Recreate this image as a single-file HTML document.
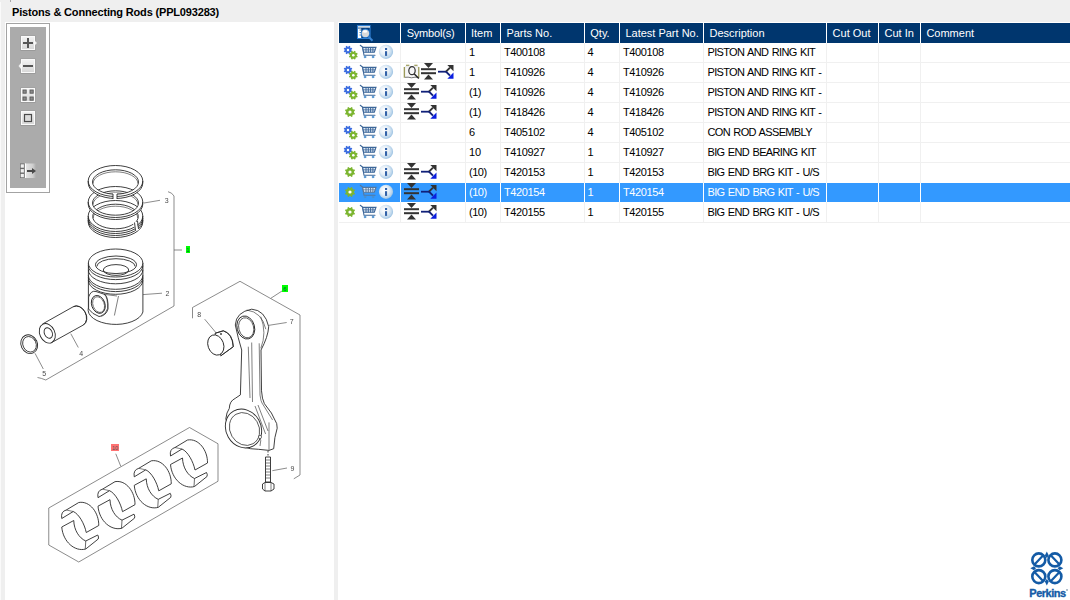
<!DOCTYPE html>
<html><head><meta charset="utf-8"><style>
*{margin:0;padding:0;box-sizing:border-box}
html,body{width:1070px;height:600px;overflow:hidden;background:#efefef;font-family:"Liberation Sans", sans-serif;position:relative}
.a{position:absolute}
.t{position:absolute;font-size:11px;line-height:13px;white-space:nowrap;color:#000}
.h{color:#fff}
</style></head><body>
<div class="a" style="left:0;top:2px;width:1px;height:598px;background:#fafafa"></div>
<div class="a" style="left:10px;top:0;width:1px;height:2px;background:#a8a8a8"></div>
<div class="t" style="left:12px;top:6px;font-weight:bold;font-size:11px;letter-spacing:-0.17px">Pistons &amp; Connecting Rods (PPL093283)</div>
<div class="a" style="left:5px;top:22px;width:329px;height:578px;background:#fff"></div>
<div class="a" style="left:338px;top:22px;width:732px;height:578px;background:#fff"></div>
<div class="a" style="left:339px;top:23px;width:731px;height:20px;background:#00366e"></div>
<div class="a" style="left:400px;top:23px;width:1px;height:20px;background:#fff"></div>
<div class="a" style="left:465px;top:23px;width:1px;height:20px;background:#fff"></div>
<div class="a" style="left:500px;top:23px;width:1px;height:20px;background:#fff"></div>
<div class="a" style="left:584px;top:23px;width:1px;height:20px;background:#fff"></div>
<div class="a" style="left:619px;top:23px;width:1px;height:20px;background:#fff"></div>
<div class="a" style="left:703px;top:23px;width:1px;height:20px;background:#fff"></div>
<div class="a" style="left:826px;top:23px;width:1px;height:20px;background:#fff"></div>
<div class="a" style="left:878px;top:23px;width:1px;height:20px;background:#fff"></div>
<div class="a" style="left:920px;top:23px;width:1px;height:20px;background:#fff"></div>
<div class="a" style="left:339px;top:183px;width:731px;height:19px;background:#3399ff"></div>
<div class="a" style="left:339px;top:62px;width:731px;height:1px;background:#f0f0f0"></div>
<div class="a" style="left:339px;top:82px;width:731px;height:1px;background:#f0f0f0"></div>
<div class="a" style="left:339px;top:102px;width:731px;height:1px;background:#f0f0f0"></div>
<div class="a" style="left:339px;top:122px;width:731px;height:1px;background:#f0f0f0"></div>
<div class="a" style="left:339px;top:142px;width:731px;height:1px;background:#f0f0f0"></div>
<div class="a" style="left:339px;top:162px;width:731px;height:1px;background:#f0f0f0"></div>
<div class="a" style="left:339px;top:222px;width:731px;height:1px;background:#f0f0f0"></div>
<div class="a" style="left:400px;top:43px;width:1px;height:179px;background:#f0f0f0"></div>
<div class="a" style="left:400px;top:183px;width:1px;height:19px;background:#fff"></div>
<div class="a" style="left:465px;top:43px;width:1px;height:179px;background:#f0f0f0"></div>
<div class="a" style="left:465px;top:183px;width:1px;height:19px;background:#fff"></div>
<div class="a" style="left:500px;top:43px;width:1px;height:179px;background:#f0f0f0"></div>
<div class="a" style="left:500px;top:183px;width:1px;height:19px;background:#fff"></div>
<div class="a" style="left:584px;top:43px;width:1px;height:179px;background:#f0f0f0"></div>
<div class="a" style="left:584px;top:183px;width:1px;height:19px;background:#fff"></div>
<div class="a" style="left:619px;top:43px;width:1px;height:179px;background:#f0f0f0"></div>
<div class="a" style="left:619px;top:183px;width:1px;height:19px;background:#fff"></div>
<div class="a" style="left:703px;top:43px;width:1px;height:179px;background:#f0f0f0"></div>
<div class="a" style="left:703px;top:183px;width:1px;height:19px;background:#fff"></div>
<div class="a" style="left:826px;top:43px;width:1px;height:179px;background:#f0f0f0"></div>
<div class="a" style="left:826px;top:183px;width:1px;height:19px;background:#fff"></div>
<div class="a" style="left:878px;top:43px;width:1px;height:179px;background:#f0f0f0"></div>
<div class="a" style="left:878px;top:183px;width:1px;height:19px;background:#fff"></div>
<div class="a" style="left:920px;top:43px;width:1px;height:179px;background:#f0f0f0"></div>
<div class="a" style="left:920px;top:183px;width:1px;height:19px;background:#fff"></div>
<div class="t h" style="left:406.7px;top:27px;letter-spacing:-0.2px">Symbol(s)</div>
<div class="t h" style="left:471.0px;top:27px;letter-spacing:0px">Item</div>
<div class="t h" style="left:506.4px;top:27px;letter-spacing:0px">Parts No.</div>
<div class="t h" style="left:590.3px;top:27px;letter-spacing:0px">Qty.</div>
<div class="t h" style="left:625.4px;top:27px;letter-spacing:0px">Latest Part No.</div>
<div class="t h" style="left:709.5px;top:27px;letter-spacing:0px">Description</div>
<div class="t h" style="left:832.6px;top:27px;letter-spacing:0px">Cut Out</div>
<div class="t h" style="left:884.5px;top:27px;letter-spacing:0px">Cut In</div>
<div class="t h" style="left:926.4px;top:27px;letter-spacing:0px">Comment</div>
<div class="t" style="left:469px;top:46px;color:#000;letter-spacing:0px;word-spacing:0px">1</div>
<div class="t" style="left:504px;top:46px;color:#000;letter-spacing:-0.38px;word-spacing:0px">T400108</div>
<div class="t" style="left:587.5px;top:46px;color:#000;letter-spacing:0px;word-spacing:0px">4</div>
<div class="t" style="left:623px;top:46px;color:#000;letter-spacing:-0.38px;word-spacing:0px">T400108</div>
<div class="t" style="left:707.5px;top:46px;color:#000;letter-spacing:-0.66px;word-spacing:1px">PISTON AND RING KIT</div>
<div class="t" style="left:469px;top:66px;color:#000;letter-spacing:0px;word-spacing:0px">1</div>
<div class="t" style="left:504px;top:66px;color:#000;letter-spacing:-0.38px;word-spacing:0px">T410926</div>
<div class="t" style="left:587.5px;top:66px;color:#000;letter-spacing:0px;word-spacing:0px">4</div>
<div class="t" style="left:623px;top:66px;color:#000;letter-spacing:-0.38px;word-spacing:0px">T410926</div>
<div class="t" style="left:707.5px;top:66px;color:#000;letter-spacing:-0.66px;word-spacing:1px">PISTON AND RING KIT -</div>
<div class="t" style="left:469px;top:86px;color:#000;letter-spacing:-0.5px;word-spacing:0px">(1)</div>
<div class="t" style="left:504px;top:86px;color:#000;letter-spacing:-0.38px;word-spacing:0px">T410926</div>
<div class="t" style="left:587.5px;top:86px;color:#000;letter-spacing:0px;word-spacing:0px">4</div>
<div class="t" style="left:623px;top:86px;color:#000;letter-spacing:-0.38px;word-spacing:0px">T410926</div>
<div class="t" style="left:707.5px;top:86px;color:#000;letter-spacing:-0.66px;word-spacing:1px">PISTON AND RING KIT -</div>
<div class="t" style="left:469px;top:106px;color:#000;letter-spacing:-0.5px;word-spacing:0px">(1)</div>
<div class="t" style="left:504px;top:106px;color:#000;letter-spacing:-0.38px;word-spacing:0px">T418426</div>
<div class="t" style="left:587.5px;top:106px;color:#000;letter-spacing:0px;word-spacing:0px">4</div>
<div class="t" style="left:623px;top:106px;color:#000;letter-spacing:-0.38px;word-spacing:0px">T418426</div>
<div class="t" style="left:707.5px;top:106px;color:#000;letter-spacing:-0.66px;word-spacing:1px">PISTON AND RING KIT -</div>
<div class="t" style="left:469px;top:126px;color:#000;letter-spacing:0px;word-spacing:0px">6</div>
<div class="t" style="left:504px;top:126px;color:#000;letter-spacing:-0.38px;word-spacing:0px">T405102</div>
<div class="t" style="left:587.5px;top:126px;color:#000;letter-spacing:0px;word-spacing:0px">4</div>
<div class="t" style="left:623px;top:126px;color:#000;letter-spacing:-0.38px;word-spacing:0px">T405102</div>
<div class="t" style="left:707.5px;top:126px;color:#000;letter-spacing:-0.66px;word-spacing:1px">CON ROD ASSEMBLY</div>
<div class="t" style="left:469px;top:146px;color:#000;letter-spacing:0px;word-spacing:0px">10</div>
<div class="t" style="left:504px;top:146px;color:#000;letter-spacing:-0.38px;word-spacing:0px">T410927</div>
<div class="t" style="left:587.5px;top:146px;color:#000;letter-spacing:0px;word-spacing:0px">1</div>
<div class="t" style="left:623px;top:146px;color:#000;letter-spacing:-0.38px;word-spacing:0px">T410927</div>
<div class="t" style="left:707.5px;top:146px;color:#000;letter-spacing:-0.66px;word-spacing:1px">BIG END BEARING KIT</div>
<div class="t" style="left:469px;top:166px;color:#000;letter-spacing:-0.5px;word-spacing:0px">(10)</div>
<div class="t" style="left:504px;top:166px;color:#000;letter-spacing:-0.38px;word-spacing:0px">T420153</div>
<div class="t" style="left:587.5px;top:166px;color:#000;letter-spacing:0px;word-spacing:0px">1</div>
<div class="t" style="left:623px;top:166px;color:#000;letter-spacing:-0.38px;word-spacing:0px">T420153</div>
<div class="t" style="left:707.5px;top:166px;color:#000;letter-spacing:-0.66px;word-spacing:1px">BIG END BRG KIT - U/S</div>
<div class="t" style="left:469px;top:186px;color:#fff;letter-spacing:-0.5px;word-spacing:0px">(10)</div>
<div class="t" style="left:504px;top:186px;color:#fff;letter-spacing:-0.38px;word-spacing:0px">T420154</div>
<div class="t" style="left:587.5px;top:186px;color:#fff;letter-spacing:0px;word-spacing:0px">1</div>
<div class="t" style="left:623px;top:186px;color:#fff;letter-spacing:-0.38px;word-spacing:0px">T420154</div>
<div class="t" style="left:707.5px;top:186px;color:#fff;letter-spacing:-0.66px;word-spacing:1px">BIG END BRG KIT - U/S</div>
<div class="t" style="left:469px;top:206px;color:#000;letter-spacing:-0.5px;word-spacing:0px">(10)</div>
<div class="t" style="left:504px;top:206px;color:#000;letter-spacing:-0.38px;word-spacing:0px">T420155</div>
<div class="t" style="left:587.5px;top:206px;color:#000;letter-spacing:0px;word-spacing:0px">1</div>
<div class="t" style="left:623px;top:206px;color:#000;letter-spacing:-0.38px;word-spacing:0px">T420155</div>
<div class="t" style="left:707.5px;top:206px;color:#000;letter-spacing:-0.66px;word-spacing:1px">BIG END BRG KIT - U/S</div>
<svg class="a" style="left:0;top:0" width="1070" height="600" viewBox="0 0 1070 600"><defs><radialGradient id="ig" cx="0.45" cy="0.45" r="0.55" fx="0.35" fy="0.35"><stop offset="0" stop-color="#ffffff"/><stop offset="0.55" stop-color="#e6eff7"/><stop offset="0.85" stop-color="#bcd6ec"/><stop offset="1" stop-color="#9cc2e2"/></radialGradient></defs><polygon points="351.36,50.51 352.29,50.99 351.73,52.33 350.73,52.02 350.02,52.73 350.33,53.73 348.99,54.29 348.51,53.36 347.49,53.36 347.01,54.29 345.67,53.73 345.98,52.73 345.27,52.02 344.27,52.33 343.71,50.99 344.64,50.51 344.64,49.49 343.71,49.01 344.27,47.67 345.27,47.98 345.98,47.27 345.67,46.27 347.01,45.71 347.49,46.64 348.51,46.64 348.99,45.71 350.33,46.27 350.02,47.27 350.73,47.98 351.73,47.67 352.29,49.01 351.36,49.49" fill="#3d6ee0"/><circle cx="348" cy="50" r="1.2" fill="#fff"/><polygon points="356.76,55.72 357.68,56.22 357.12,57.58 356.12,57.28 355.38,58.02 355.68,59.02 354.32,59.58 353.82,58.66 352.78,58.66 352.28,59.58 350.92,59.02 351.22,58.02 350.48,57.28 349.48,57.58 348.92,56.22 349.84,55.72 349.84,54.68 348.92,54.18 349.48,52.82 350.48,53.12 351.22,52.38 350.92,51.38 352.28,50.82 352.78,51.74 353.82,51.74 354.32,50.82 355.68,51.38 355.38,52.38 356.12,53.12 357.12,52.82 357.68,54.18 356.76,54.68" fill="#7cb530"/><circle cx="353.3" cy="55.2" r="1.3" fill="#fff"/><g transform="translate(360,45)" fill="none" stroke="#3d6799" stroke-width="1.1" stroke-linecap="round"><path d="M0.3,0.3 L2.5,2 L4,10.3 L15,10.3"/><path d="M2.6,2.2 L16,2.4 L14.3,7.3 L3.6,7.3 Z" fill="#dfe9f4"/><path d="M6,3 V7 M8.3,3 V7 M10.6,3 V7 M12.9,3 V7" stroke-width="1"/><path d="M3.5,4.8 H15" stroke-width="0.7"/><circle cx="5" cy="12" r="0.9" fill="#4a90d0" stroke="#4a90d0" stroke-width="0.6"/><circle cx="13" cy="12" r="0.9" fill="#4a90d0" stroke="#4a90d0" stroke-width="0.6"/></g><circle cx="386" cy="51.8" r="7.1" fill="url(#ig)"/><rect x="385" y="48" width="2.1" height="2" fill="#3262a8"/><rect x="385" y="51.2" width="2.1" height="4.7" fill="#3262a8"/><polygon points="351.36,70.51 352.29,70.99 351.73,72.33 350.73,72.02 350.02,72.73 350.33,73.73 348.99,74.29 348.51,73.36 347.49,73.36 347.01,74.29 345.67,73.73 345.98,72.73 345.27,72.02 344.27,72.33 343.71,70.99 344.64,70.51 344.64,69.49 343.71,69.01 344.27,67.67 345.27,67.98 345.98,67.27 345.67,66.27 347.01,65.71 347.49,66.64 348.51,66.64 348.99,65.71 350.33,66.27 350.02,67.27 350.73,67.98 351.73,67.67 352.29,69.01 351.36,69.49" fill="#3d6ee0"/><circle cx="348" cy="70" r="1.2" fill="#fff"/><polygon points="356.76,75.72 357.68,76.22 357.12,77.58 356.12,77.28 355.38,78.02 355.68,79.02 354.32,79.58 353.82,78.66 352.78,78.66 352.28,79.58 350.92,79.02 351.22,78.02 350.48,77.28 349.48,77.58 348.92,76.22 349.84,75.72 349.84,74.68 348.92,74.18 349.48,72.82 350.48,73.12 351.22,72.38 350.92,71.38 352.28,70.82 352.78,71.74 353.82,71.74 354.32,70.82 355.68,71.38 355.38,72.38 356.12,73.12 357.12,72.82 357.68,74.18 356.76,74.68" fill="#7cb530"/><circle cx="353.3" cy="75.2" r="1.3" fill="#fff"/><g transform="translate(360,65)" fill="none" stroke="#3d6799" stroke-width="1.1" stroke-linecap="round"><path d="M0.3,0.3 L2.5,2 L4,10.3 L15,10.3"/><path d="M2.6,2.2 L16,2.4 L14.3,7.3 L3.6,7.3 Z" fill="#dfe9f4"/><path d="M6,3 V7 M8.3,3 V7 M10.6,3 V7 M12.9,3 V7" stroke-width="1"/><path d="M3.5,4.8 H15" stroke-width="0.7"/><circle cx="5" cy="12" r="0.9" fill="#4a90d0" stroke="#4a90d0" stroke-width="0.6"/><circle cx="13" cy="12" r="0.9" fill="#4a90d0" stroke="#4a90d0" stroke-width="0.6"/></g><circle cx="386" cy="71.8" r="7.1" fill="url(#ig)"/><rect x="385" y="68" width="2.1" height="2" fill="#3262a8"/><rect x="385" y="71.2" width="2.1" height="4.7" fill="#3262a8"/><g transform="translate(401,63)"><path d="M3.5,4 L5,2.5 H8.5 L10.5,4 L12.5,2.5 H16.5 L18,4 V14.5 H3.5 Z" fill="#e9e9e9"/><path d="M4.5,4.5 H17 V14 H4.5 Z" fill="#f7f7f7"/><path d="M3.3,4 V14.8 M17.8,4 V14.8 M5,2.3 H8.3 M13.3,2.3 H16.5" stroke="#8c8a3c" stroke-width="1.1"/><path d="M4,14.3 Q7,13.8 10.5,14.8 Q14,13.8 17.5,14.3" fill="none" stroke="#555" stroke-width="0.8"/><ellipse cx="11" cy="7.7" rx="3.2" ry="4" fill="none" stroke="#333" stroke-width="1.2"/><path d="M13.3,11 L17.8,15.5" stroke="#222" stroke-width="1.4"/></g><g transform="translate(421,63)" fill="#333"><path d="M3,0 L12,0 L7.5,5 Z"/><rect x="0" y="5.2" width="15" height="2"/><rect x="0" y="9.2" width="15" height="2"/><path d="M3,16.5 L12,16.5 L7.5,11.5 Z"/></g><g transform="translate(438,65)"><path d="M0,6.7 H8.5" stroke="#10207a" stroke-width="1.8"/><path d="M8,6.7 L12,2.7" stroke="#333" stroke-width="1.9"/><path d="M9.3,0 H15.5 V6.2 Z" fill="#333"/><path d="M8,6.7 L12,10.7" stroke="#10207a" stroke-width="1.9"/><path d="M9.3,13.8 H15.5 V7.6 Z" fill="#0a1ee0"/></g><polygon points="351.36,90.51 352.29,90.99 351.73,92.33 350.73,92.02 350.02,92.73 350.33,93.73 348.99,94.29 348.51,93.36 347.49,93.36 347.01,94.29 345.67,93.73 345.98,92.73 345.27,92.02 344.27,92.33 343.71,90.99 344.64,90.51 344.64,89.49 343.71,89.01 344.27,87.67 345.27,87.98 345.98,87.27 345.67,86.27 347.01,85.71 347.49,86.64 348.51,86.64 348.99,85.71 350.33,86.27 350.02,87.27 350.73,87.98 351.73,87.67 352.29,89.01 351.36,89.49" fill="#3d6ee0"/><circle cx="348" cy="90" r="1.2" fill="#fff"/><polygon points="356.76,95.72 357.68,96.22 357.12,97.58 356.12,97.28 355.38,98.02 355.68,99.02 354.32,99.58 353.82,98.66 352.78,98.66 352.28,99.58 350.92,99.02 351.22,98.02 350.48,97.28 349.48,97.58 348.92,96.22 349.84,95.72 349.84,94.68 348.92,94.18 349.48,92.82 350.48,93.12 351.22,92.38 350.92,91.38 352.28,90.82 352.78,91.74 353.82,91.74 354.32,90.82 355.68,91.38 355.38,92.38 356.12,93.12 357.12,92.82 357.68,94.18 356.76,94.68" fill="#7cb530"/><circle cx="353.3" cy="95.2" r="1.3" fill="#fff"/><g transform="translate(360,85)" fill="none" stroke="#3d6799" stroke-width="1.1" stroke-linecap="round"><path d="M0.3,0.3 L2.5,2 L4,10.3 L15,10.3"/><path d="M2.6,2.2 L16,2.4 L14.3,7.3 L3.6,7.3 Z" fill="#dfe9f4"/><path d="M6,3 V7 M8.3,3 V7 M10.6,3 V7 M12.9,3 V7" stroke-width="1"/><path d="M3.5,4.8 H15" stroke-width="0.7"/><circle cx="5" cy="12" r="0.9" fill="#4a90d0" stroke="#4a90d0" stroke-width="0.6"/><circle cx="13" cy="12" r="0.9" fill="#4a90d0" stroke="#4a90d0" stroke-width="0.6"/></g><circle cx="386" cy="91.8" r="7.1" fill="url(#ig)"/><rect x="385" y="88" width="2.1" height="2" fill="#3262a8"/><rect x="385" y="91.2" width="2.1" height="4.7" fill="#3262a8"/><g transform="translate(404,83)" fill="#333"><path d="M3,0 L12,0 L7.5,5 Z"/><rect x="0" y="5.2" width="15" height="2"/><rect x="0" y="9.2" width="15" height="2"/><path d="M3,16.5 L12,16.5 L7.5,11.5 Z"/></g><g transform="translate(421,85)"><path d="M0,6.7 H8.5" stroke="#10207a" stroke-width="1.8"/><path d="M8,6.7 L12,2.7" stroke="#333" stroke-width="1.9"/><path d="M9.3,0 H15.5 V6.2 Z" fill="#333"/><path d="M8,6.7 L12,10.7" stroke="#10207a" stroke-width="1.9"/><path d="M9.3,13.8 H15.5 V7.6 Z" fill="#0a1ee0"/></g><polygon points="353.96,112.59 354.97,113.15 354.33,114.70 353.22,114.38 352.38,115.22 352.70,116.33 351.15,116.97 350.59,115.96 349.41,115.96 348.85,116.97 347.30,116.33 347.62,115.22 346.78,114.38 345.67,114.70 345.03,113.15 346.04,112.59 346.04,111.41 345.03,110.85 345.67,109.30 346.78,109.62 347.62,108.78 347.30,107.67 348.85,107.03 349.41,108.04 350.59,108.04 351.15,107.03 352.70,107.67 352.38,108.78 353.22,109.62 354.33,109.30 354.97,110.85 353.96,111.41" fill="#7cb530"/><circle cx="350" cy="112" r="1.6" fill="#fff"/><g transform="translate(360,105)" fill="none" stroke="#3d6799" stroke-width="1.1" stroke-linecap="round"><path d="M0.3,0.3 L2.5,2 L4,10.3 L15,10.3"/><path d="M2.6,2.2 L16,2.4 L14.3,7.3 L3.6,7.3 Z" fill="#dfe9f4"/><path d="M6,3 V7 M8.3,3 V7 M10.6,3 V7 M12.9,3 V7" stroke-width="1"/><path d="M3.5,4.8 H15" stroke-width="0.7"/><circle cx="5" cy="12" r="0.9" fill="#4a90d0" stroke="#4a90d0" stroke-width="0.6"/><circle cx="13" cy="12" r="0.9" fill="#4a90d0" stroke="#4a90d0" stroke-width="0.6"/></g><circle cx="386" cy="111.8" r="7.1" fill="url(#ig)"/><rect x="385" y="108" width="2.1" height="2" fill="#3262a8"/><rect x="385" y="111.2" width="2.1" height="4.7" fill="#3262a8"/><g transform="translate(404,103)" fill="#333"><path d="M3,0 L12,0 L7.5,5 Z"/><rect x="0" y="5.2" width="15" height="2"/><rect x="0" y="9.2" width="15" height="2"/><path d="M3,16.5 L12,16.5 L7.5,11.5 Z"/></g><g transform="translate(421,105)"><path d="M0,6.7 H8.5" stroke="#10207a" stroke-width="1.8"/><path d="M8,6.7 L12,2.7" stroke="#333" stroke-width="1.9"/><path d="M9.3,0 H15.5 V6.2 Z" fill="#333"/><path d="M8,6.7 L12,10.7" stroke="#10207a" stroke-width="1.9"/><path d="M9.3,13.8 H15.5 V7.6 Z" fill="#0a1ee0"/></g><polygon points="351.36,130.51 352.29,130.99 351.73,132.33 350.73,132.02 350.02,132.73 350.33,133.73 348.99,134.29 348.51,133.36 347.49,133.36 347.01,134.29 345.67,133.73 345.98,132.73 345.27,132.02 344.27,132.33 343.71,130.99 344.64,130.51 344.64,129.49 343.71,129.01 344.27,127.67 345.27,127.98 345.98,127.27 345.67,126.27 347.01,125.71 347.49,126.64 348.51,126.64 348.99,125.71 350.33,126.27 350.02,127.27 350.73,127.98 351.73,127.67 352.29,129.01 351.36,129.49" fill="#3d6ee0"/><circle cx="348" cy="130" r="1.2" fill="#fff"/><polygon points="356.76,135.72 357.68,136.22 357.12,137.58 356.12,137.28 355.38,138.02 355.68,139.02 354.32,139.58 353.82,138.66 352.78,138.66 352.28,139.58 350.92,139.02 351.22,138.02 350.48,137.28 349.48,137.58 348.92,136.22 349.84,135.72 349.84,134.68 348.92,134.18 349.48,132.82 350.48,133.12 351.22,132.38 350.92,131.38 352.28,130.82 352.78,131.74 353.82,131.74 354.32,130.82 355.68,131.38 355.38,132.38 356.12,133.12 357.12,132.82 357.68,134.18 356.76,134.68" fill="#7cb530"/><circle cx="353.3" cy="135.2" r="1.3" fill="#fff"/><g transform="translate(360,125)" fill="none" stroke="#3d6799" stroke-width="1.1" stroke-linecap="round"><path d="M0.3,0.3 L2.5,2 L4,10.3 L15,10.3"/><path d="M2.6,2.2 L16,2.4 L14.3,7.3 L3.6,7.3 Z" fill="#dfe9f4"/><path d="M6,3 V7 M8.3,3 V7 M10.6,3 V7 M12.9,3 V7" stroke-width="1"/><path d="M3.5,4.8 H15" stroke-width="0.7"/><circle cx="5" cy="12" r="0.9" fill="#4a90d0" stroke="#4a90d0" stroke-width="0.6"/><circle cx="13" cy="12" r="0.9" fill="#4a90d0" stroke="#4a90d0" stroke-width="0.6"/></g><circle cx="386" cy="131.8" r="7.1" fill="url(#ig)"/><rect x="385" y="128" width="2.1" height="2" fill="#3262a8"/><rect x="385" y="131.2" width="2.1" height="4.7" fill="#3262a8"/><polygon points="351.36,150.51 352.29,150.99 351.73,152.33 350.73,152.02 350.02,152.73 350.33,153.73 348.99,154.29 348.51,153.36 347.49,153.36 347.01,154.29 345.67,153.73 345.98,152.73 345.27,152.02 344.27,152.33 343.71,150.99 344.64,150.51 344.64,149.49 343.71,149.01 344.27,147.67 345.27,147.98 345.98,147.27 345.67,146.27 347.01,145.71 347.49,146.64 348.51,146.64 348.99,145.71 350.33,146.27 350.02,147.27 350.73,147.98 351.73,147.67 352.29,149.01 351.36,149.49" fill="#3d6ee0"/><circle cx="348" cy="150" r="1.2" fill="#fff"/><polygon points="356.76,155.72 357.68,156.22 357.12,157.58 356.12,157.28 355.38,158.02 355.68,159.02 354.32,159.58 353.82,158.66 352.78,158.66 352.28,159.58 350.92,159.02 351.22,158.02 350.48,157.28 349.48,157.58 348.92,156.22 349.84,155.72 349.84,154.68 348.92,154.18 349.48,152.82 350.48,153.12 351.22,152.38 350.92,151.38 352.28,150.82 352.78,151.74 353.82,151.74 354.32,150.82 355.68,151.38 355.38,152.38 356.12,153.12 357.12,152.82 357.68,154.18 356.76,154.68" fill="#7cb530"/><circle cx="353.3" cy="155.2" r="1.3" fill="#fff"/><g transform="translate(360,145)" fill="none" stroke="#3d6799" stroke-width="1.1" stroke-linecap="round"><path d="M0.3,0.3 L2.5,2 L4,10.3 L15,10.3"/><path d="M2.6,2.2 L16,2.4 L14.3,7.3 L3.6,7.3 Z" fill="#dfe9f4"/><path d="M6,3 V7 M8.3,3 V7 M10.6,3 V7 M12.9,3 V7" stroke-width="1"/><path d="M3.5,4.8 H15" stroke-width="0.7"/><circle cx="5" cy="12" r="0.9" fill="#4a90d0" stroke="#4a90d0" stroke-width="0.6"/><circle cx="13" cy="12" r="0.9" fill="#4a90d0" stroke="#4a90d0" stroke-width="0.6"/></g><circle cx="386" cy="151.8" r="7.1" fill="url(#ig)"/><rect x="385" y="148" width="2.1" height="2" fill="#3262a8"/><rect x="385" y="151.2" width="2.1" height="4.7" fill="#3262a8"/><polygon points="353.96,172.59 354.97,173.15 354.33,174.70 353.22,174.38 352.38,175.22 352.70,176.33 351.15,176.97 350.59,175.96 349.41,175.96 348.85,176.97 347.30,176.33 347.62,175.22 346.78,174.38 345.67,174.70 345.03,173.15 346.04,172.59 346.04,171.41 345.03,170.85 345.67,169.30 346.78,169.62 347.62,168.78 347.30,167.67 348.85,167.03 349.41,168.04 350.59,168.04 351.15,167.03 352.70,167.67 352.38,168.78 353.22,169.62 354.33,169.30 354.97,170.85 353.96,171.41" fill="#7cb530"/><circle cx="350" cy="172" r="1.6" fill="#fff"/><g transform="translate(360,165)" fill="none" stroke="#3d6799" stroke-width="1.1" stroke-linecap="round"><path d="M0.3,0.3 L2.5,2 L4,10.3 L15,10.3"/><path d="M2.6,2.2 L16,2.4 L14.3,7.3 L3.6,7.3 Z" fill="#dfe9f4"/><path d="M6,3 V7 M8.3,3 V7 M10.6,3 V7 M12.9,3 V7" stroke-width="1"/><path d="M3.5,4.8 H15" stroke-width="0.7"/><circle cx="5" cy="12" r="0.9" fill="#4a90d0" stroke="#4a90d0" stroke-width="0.6"/><circle cx="13" cy="12" r="0.9" fill="#4a90d0" stroke="#4a90d0" stroke-width="0.6"/></g><circle cx="386" cy="171.8" r="7.1" fill="url(#ig)"/><rect x="385" y="168" width="2.1" height="2" fill="#3262a8"/><rect x="385" y="171.2" width="2.1" height="4.7" fill="#3262a8"/><g transform="translate(404,163)" fill="#333"><path d="M3,0 L12,0 L7.5,5 Z"/><rect x="0" y="5.2" width="15" height="2"/><rect x="0" y="9.2" width="15" height="2"/><path d="M3,16.5 L12,16.5 L7.5,11.5 Z"/></g><g transform="translate(421,165)"><path d="M0,6.7 H8.5" stroke="#10207a" stroke-width="1.8"/><path d="M8,6.7 L12,2.7" stroke="#333" stroke-width="1.9"/><path d="M9.3,0 H15.5 V6.2 Z" fill="#333"/><path d="M8,6.7 L12,10.7" stroke="#10207a" stroke-width="1.9"/><path d="M9.3,13.8 H15.5 V7.6 Z" fill="#0a1ee0"/></g><polygon points="353.96,192.59 354.97,193.15 354.33,194.70 353.22,194.38 352.38,195.22 352.70,196.33 351.15,196.97 350.59,195.96 349.41,195.96 348.85,196.97 347.30,196.33 347.62,195.22 346.78,194.38 345.67,194.70 345.03,193.15 346.04,192.59 346.04,191.41 345.03,190.85 345.67,189.30 346.78,189.62 347.62,188.78 347.30,187.67 348.85,187.03 349.41,188.04 350.59,188.04 351.15,187.03 352.70,187.67 352.38,188.78 353.22,189.62 354.33,189.30 354.97,190.85 353.96,191.41" fill="#7cb530"/><circle cx="350" cy="192" r="1.6" fill="#fff"/><g transform="translate(360,185)" fill="none" stroke="#56789e" stroke-width="1.1" stroke-linecap="round"><path d="M0.3,0.3 L2.5,2 L4,10.3 L15,10.3"/><path d="M2.6,2.2 L16,2.4 L14.3,7.3 L3.6,7.3 Z" fill="#dfe9f4"/><path d="M6,3 V7 M8.3,3 V7 M10.6,3 V7 M12.9,3 V7" stroke-width="1"/><path d="M3.5,4.8 H15" stroke-width="0.7"/><circle cx="5" cy="12" r="0.9" fill="#4a90d0" stroke="#4a90d0" stroke-width="0.6"/><circle cx="13" cy="12" r="0.9" fill="#4a90d0" stroke="#4a90d0" stroke-width="0.6"/></g><circle cx="386" cy="191.8" r="7.1" fill="url(#ig)"/><rect x="385" y="188" width="2.1" height="2" fill="#3262a8"/><rect x="385" y="191.2" width="2.1" height="4.7" fill="#3262a8"/><g transform="translate(404,183)" fill="#333"><path d="M3,0 L12,0 L7.5,5 Z"/><rect x="0" y="5.2" width="15" height="2"/><rect x="0" y="9.2" width="15" height="2"/><path d="M3,16.5 L12,16.5 L7.5,11.5 Z"/></g><g transform="translate(421,185)"><path d="M0,6.7 H8.5" stroke="#10207a" stroke-width="1.8"/><path d="M8,6.7 L12,2.7" stroke="#333" stroke-width="1.9"/><path d="M9.3,0 H15.5 V6.2 Z" fill="#333"/><path d="M8,6.7 L12,10.7" stroke="#10207a" stroke-width="1.9"/><path d="M9.3,13.8 H15.5 V7.6 Z" fill="#0a1ee0"/></g><polygon points="353.96,212.59 354.97,213.15 354.33,214.70 353.22,214.38 352.38,215.22 352.70,216.33 351.15,216.97 350.59,215.96 349.41,215.96 348.85,216.97 347.30,216.33 347.62,215.22 346.78,214.38 345.67,214.70 345.03,213.15 346.04,212.59 346.04,211.41 345.03,210.85 345.67,209.30 346.78,209.62 347.62,208.78 347.30,207.67 348.85,207.03 349.41,208.04 350.59,208.04 351.15,207.03 352.70,207.67 352.38,208.78 353.22,209.62 354.33,209.30 354.97,210.85 353.96,211.41" fill="#7cb530"/><circle cx="350" cy="212" r="1.6" fill="#fff"/><g transform="translate(360,205)" fill="none" stroke="#3d6799" stroke-width="1.1" stroke-linecap="round"><path d="M0.3,0.3 L2.5,2 L4,10.3 L15,10.3"/><path d="M2.6,2.2 L16,2.4 L14.3,7.3 L3.6,7.3 Z" fill="#dfe9f4"/><path d="M6,3 V7 M8.3,3 V7 M10.6,3 V7 M12.9,3 V7" stroke-width="1"/><path d="M3.5,4.8 H15" stroke-width="0.7"/><circle cx="5" cy="12" r="0.9" fill="#4a90d0" stroke="#4a90d0" stroke-width="0.6"/><circle cx="13" cy="12" r="0.9" fill="#4a90d0" stroke="#4a90d0" stroke-width="0.6"/></g><circle cx="386" cy="211.8" r="7.1" fill="url(#ig)"/><rect x="385" y="208" width="2.1" height="2" fill="#3262a8"/><rect x="385" y="211.2" width="2.1" height="4.7" fill="#3262a8"/><g transform="translate(404,203)" fill="#333"><path d="M3,0 L12,0 L7.5,5 Z"/><rect x="0" y="5.2" width="15" height="2"/><rect x="0" y="9.2" width="15" height="2"/><path d="M3,16.5 L12,16.5 L7.5,11.5 Z"/></g><g transform="translate(421,205)"><path d="M0,6.7 H8.5" stroke="#10207a" stroke-width="1.8"/><path d="M8,6.7 L12,2.7" stroke="#333" stroke-width="1.9"/><path d="M9.3,0 H15.5 V6.2 Z" fill="#333"/><path d="M8,6.7 L12,10.7" stroke="#10207a" stroke-width="1.9"/><path d="M9.3,13.8 H15.5 V7.6 Z" fill="#0a1ee0"/></g><g><rect x="357.5" y="25.5" width="12.6" height="13" fill="#0a3f7a" stroke="#2f7fd2" stroke-width="1"/><rect x="358" y="26.2" width="12" height="1.4" fill="#fff"/><rect x="358" y="28.5" width="3.2" height="9.5" fill="#fff"/><path d="M359.5,30 H361 M359.5,32.5 H361 M359.5,35 H361" stroke="#2f6fb2" stroke-width="0.9"/><circle cx="365.4" cy="33.4" r="4.6" fill="#2f7fd2"/><circle cx="365.4" cy="33.4" r="3.7" fill="#d9d9d9"/><ellipse cx="365" cy="31.5" rx="2.2" ry="1.2" fill="#fff"/><path d="M368.6,36.8 L372.5,40.8" stroke="#3a86d6" stroke-width="2"/></g></svg>
<svg class="a" style="left:0;top:0" width="1070" height="600" viewBox="0 0 1070 600"><g fill="none" stroke="#5a5a5a" stroke-width="0.7"><path d="M168,191.7 Q172,192.5 174,196 V306 L45.8,380 Q41,378 37.5,377.5 M174,250 H182"/><path d="M144,203 L160,200.3 M143,294.6 L162,293.2 M70.8,333.7 L78.3,347.5 M35,353.3 L43.3,369"/><path d="M192.5,318.3 V307.5 L240,281.3 L300,315 V475 L293.8,478.8 M270.8,298.3 L282,291"/><path d="M204.7,319.2 L215.8,332.5 M269,325.3 L286.7,322.5 M272.3,470.7 L287,468"/><path d="M48.75,508 L189.5,427.5 L218,443.75 V481.25 L78.75,562 L48.75,545 Z M115.75,453.75 L120.75,466.25"/></g><g fill="none" stroke="#2a2a2a" stroke-width="0.9" stroke-linejoin="round"><path d="M88.2,216 A27.3,15.5 0 0 1 142.8,216 L142.8,222 A27.3,15.5 0 0 1 88.2,222 Z M92.7,216.5 A22.8,12.3 0 0 0 138.3,216.5 A22.8,12.3 0 0 0 92.7,216.5 Z" fill="#fff" fill-rule="evenodd" stroke="none"/><ellipse cx="115.5" cy="216" rx="27.3" ry="15.5" /><path d="M88.2,218.0 A27.3,15.5 0 0 0 142.8,218.0" /><path d="M88.2,220.0 A27.3,15.5 0 0 0 142.8,220.0" /><path d="M88.2,222.0 A27.3,15.5 0 0 0 142.8,222.0" /><path d="M88.2,216 V222 M142.8,216 V222"/><ellipse cx="115.5" cy="216.5" rx="22.8" ry="12.3" /><path d="M93.3,217.9 A22.2,11.700000000000001 0 0 1 137.7,217.9" stroke-width="0.6"/><path d="M88.2,202 A27.3,15.5 0 0 1 142.8,202 L142.8,204 A27.3,15.5 0 0 1 88.2,204 Z M92.5,203 A23,12.2 0 0 0 138.5,203 A23,12.2 0 0 0 92.5,203 Z" fill="#fff" fill-rule="evenodd" stroke="none"/><ellipse cx="115.5" cy="202" rx="27.3" ry="15.5" /><path d="M88.2,204.0 A27.3,15.5 0 0 0 142.8,204.0" /><path d="M88.2,202 V204 M142.8,202 V204"/><ellipse cx="115.5" cy="203" rx="23" ry="12.2" /><path d="M93.1,204.4 A22.4,11.6 0 0 1 137.9,204.4" stroke-width="0.6"/><path d="M88.2,181 A27.3,15.5 0 0 1 142.8,181 L142.8,183 A27.3,15.5 0 0 1 88.2,183 Z M92.5,182 A23,12.2 0 0 0 138.5,182 A23,12.2 0 0 0 92.5,182 Z" fill="#fff" fill-rule="evenodd" stroke="none"/><ellipse cx="115.5" cy="181" rx="27.3" ry="15.5" /><path d="M88.2,183.0 A27.3,15.5 0 0 0 142.8,183.0" /><path d="M88.2,181 V183 M142.8,181 V183"/><ellipse cx="115.5" cy="182" rx="23" ry="12.2" /><path d="M93.1,183.4 A22.4,11.6 0 0 1 137.9,183.4" stroke-width="0.6"/><rect x="113" y="193" width="4" height="7" fill="#fff" stroke="none"/><path d="M113,194 V199 M117,194 V199"/><rect x="134" y="222" width="3.5" height="9" fill="#fff" stroke="none" transform="rotate(-20 135 226)"/><path d="M134.5,222.5 L135.5,230.5 M137.5,221 L138.5,229"/><path d="M88.4,263 V307.5 A27.25,14.5 0 0 0 142.9,312 V263 Z" fill="#fff"/><ellipse cx="115.6" cy="263" rx="27.25" ry="14" fill="#fff"/><ellipse cx="116" cy="264.8" rx="20.5" ry="8.8" /><path d="M96.8,266.5 A19.2,7.8 0 0 1 135.2,266.5" /><ellipse cx="116" cy="270" rx="12.7" ry="5.4" /><path d="M88.35,265.6 A27.25,14 0 0 0 142.85,265.6" /><path d="M88.35,269.8 A27.25,14 0 0 0 142.85,269.8" /><path d="M88.35,275.3 A27.25,14 0 0 0 142.85,275.3" /><path d="M88.35,277.6 A27.25,14 0 0 0 142.85,277.6" /><path d="M88.35,280.3 A27.25,14 0 0 0 142.85,280.3" /><path d="M88.6,297 Q91,290 96,291.5 L105,294.5 Q108.5,298 108,309 Q106,316 99,316.5 Q92,314 88.6,309 Z" fill="#fff"/><ellipse cx="98.3" cy="304.4" rx="6.65" ry="9.2" transform="rotate(-20 98.3 304.4)"/><ellipse cx="98.6" cy="304.6" rx="5.6" ry="8.1" transform="rotate(-20 98.6 304.6)" stroke-width="0.6"/><path d="M104.5,294.5 Q108,298 107.5,308.5 Q106,314 101,316 M118.5,296 L114.4,315.5 M104,294.3 L117,296" stroke-width="0.6"/><path d="M42.5,324 L73.3,306.7 A7.5,10 -30 0 1 83.3,325 L50.8,343 Z" fill="#fff"/><ellipse cx="47.3" cy="333.3" rx="7.5" ry="10.2" transform="rotate(-25 47.3 333.3)" fill="#fff"/><ellipse cx="48.3" cy="333" rx="3.9" ry="5.5" transform="rotate(-25 48.3 333)"/><path d="M73.3,306.7 A7.5,10.2 -25 0 1 83.3,325"/><ellipse cx="29.2" cy="344.2" rx="8.2" ry="9.6" transform="rotate(-25 29.2 344.2)" stroke-width="0.9"/><ellipse cx="29.5" cy="344.3" rx="6.6" ry="8" transform="rotate(-25 29.5 344.3)" stroke-width="0.8"/><path d="M33,337 L35.5,338.5 M34,339.5 L36,341" stroke-width="0.6"/><path d="M235.3,325 Q236,312 251.7,309.2 Q265,310 268.7,326.7 Q268,337 261,350 L261.5,390.8 Q262,399 264.4,403.7 L271.4,413 L276.7,423.6 L277.2,428.2 L274.9,437.6 L273.7,448.7 L269,450.4 L258.6,449.3 L250.4,448.7 Q244,447.5 239.9,444.6 L231.7,435.2 L227,422.4 L225.8,418.9 L227,413 L229.3,408.4 Q229.5,401 235.2,398.4 L240.4,394.9 L241.7,350 Q238,338 235.3,325 Z" fill="#fff"/><ellipse cx="245.8" cy="327.5" rx="8.75" ry="11.7" transform="rotate(-15 245.8 327.5)" fill="#fff"/><ellipse cx="246.2" cy="327.8" rx="7.4" ry="10.2" transform="rotate(-15 246.2 327.8)" stroke-width="0.7"/><path d="M248.3,346.7 L250,398 M251.7,342.5 L252.5,402 M259.2,343.3 L260,395 Q261,402 262,403 L272.6,420 M260.8,316.7 Q267,333 260.8,348.3 M246.7,310 Q262,312 265.8,329.2" stroke-width="0.6"/><ellipse cx="243.5" cy="428.5" rx="20" ry="17.5" transform="rotate(60 243.5 428.5)" fill="#fff"/><ellipse cx="244.5" cy="429" rx="17" ry="14.5" transform="rotate(60 244.5 429)" stroke-width="0.7"/><path d="M255,406 L265.6,434 M258,405 L268,431 M269,422.4 V449.8 M259,436 Q262,440 260,446" stroke-width="0.6"/><circle cx="260" cy="437" r="1.6" fill="#fff" stroke-width="0.6"/><path d="M268,451 V456" stroke-dasharray="1.5 1.5"/><rect x="265.5" y="457" width="5" height="25" fill="#fff"/><path d="M266,460 H270 M266,463 H270 M266,466 H270 M266,469 H270 M266,472 H270 M266,475 H270 M266,478 H270" stroke-width="0.6"/><path d="M262.5,484 L265,482.5 H271 L274,484 V489 L271,491 H265 L262.5,489 Z" fill="#fff"/><path d="M265,482.5 V491 M271,482.5 V491" stroke-width="0.6"/><path d="M215,333.3 L223.3,330.8 Q232,333 233.3,346.7 L220.8,355.8 Z" fill="#fff"/><ellipse cx="215.8" cy="345" rx="7.8" ry="10.4" transform="rotate(-20 215.8 345)" fill="#fff"/><path d="M223.3,330.8 Q233,334 233.3,346.7 L220.8,355.8 M215,333.3 L223.3,330.8"/><circle cx="221" cy="334" r="1" fill="#444" stroke="none"/><g transform="translate(0.0,-0.0)"><path d="M61.75,518.5 Q60.5,511.5 66.25,510 L78.75,502.5 C90,500.5 99,513 98.75,525.5 L86.25,532.5 C84.5,524 79,514 73.25,511.5 Z" fill="#fff"/><path d="M66.25,510 L73.25,511.5" stroke-width="0.6"/><path d="M61.75,527 L73.75,520.5 C74,530 79,538 85.75,541 L97.75,535 Q99,537 98.25,539 L85.75,549 C75,552 63,542 61.75,527 Z" fill="#fff"/><path d="M85.75,541 L85.25,549" stroke-width="0.7"/></g><g transform="translate(36.25,-20.83)"><path d="M61.75,518.5 Q60.5,511.5 66.25,510 L78.75,502.5 C90,500.5 99,513 98.75,525.5 L86.25,532.5 C84.5,524 79,514 73.25,511.5 Z" fill="#fff"/><path d="M66.25,510 L73.25,511.5" stroke-width="0.6"/><path d="M61.75,527 L73.75,520.5 C74,530 79,538 85.75,541 L97.75,535 Q99,537 98.25,539 L85.75,549 C75,552 63,542 61.75,527 Z" fill="#fff"/><path d="M85.75,541 L85.25,549" stroke-width="0.7"/></g><g transform="translate(72.5,-41.66)"><path d="M61.75,518.5 Q60.5,511.5 66.25,510 L78.75,502.5 C90,500.5 99,513 98.75,525.5 L86.25,532.5 C84.5,524 79,514 73.25,511.5 Z" fill="#fff"/><path d="M66.25,510 L73.25,511.5" stroke-width="0.6"/><path d="M61.75,527 L73.75,520.5 C74,530 79,538 85.75,541 L97.75,535 Q99,537 98.25,539 L85.75,549 C75,552 63,542 61.75,527 Z" fill="#fff"/><path d="M85.75,541 L85.25,549" stroke-width="0.7"/></g><g transform="translate(108.75,-62.489999999999995)"><path d="M61.75,518.5 Q60.5,511.5 66.25,510 L78.75,502.5 C90,500.5 99,513 98.75,525.5 L86.25,532.5 C84.5,524 79,514 73.25,511.5 Z" fill="#fff"/><path d="M66.25,510 L73.25,511.5" stroke-width="0.6"/><path d="M61.75,527 L73.75,520.5 C74,530 79,538 85.75,541 L97.75,535 Q99,537 98.25,539 L85.75,549 C75,552 63,542 61.75,527 Z" fill="#fff"/><path d="M85.75,541 L85.25,549" stroke-width="0.7"/></g></g></svg><svg class="a" style="left:0;top:0;filter:grayscale(1)" width="1070" height="600" viewBox="0 0 1070 600"><text x="166.7" y="203" font-size="7" fill="#4a4a4a" font-family="Liberation Sans, sans-serif" text-anchor="middle">3</text><text x="167.5" y="296" font-size="7" fill="#4a4a4a" font-family="Liberation Sans, sans-serif" text-anchor="middle">2</text><text x="81.3" y="356" font-size="7" fill="#4a4a4a" font-family="Liberation Sans, sans-serif" text-anchor="middle">4</text><text x="44.2" y="375.5" font-size="7" fill="#4a4a4a" font-family="Liberation Sans, sans-serif" text-anchor="middle">5</text><text x="199.2" y="316.5" font-size="7" fill="#4a4a4a" font-family="Liberation Sans, sans-serif" text-anchor="middle">8</text><text x="291.7" y="323.5" font-size="7" fill="#4a4a4a" font-family="Liberation Sans, sans-serif" text-anchor="middle">7</text><text x="292.5" y="470.5" font-size="7" fill="#4a4a4a" font-family="Liberation Sans, sans-serif" text-anchor="middle">9</text></svg><svg class="a" style="left:0;top:0" width="1070" height="600" viewBox="0 0 1070 600"><rect x="186" y="246" width="4" height="7" fill="#00ff00"/><text x="188" y="252" font-size="6" fill="#063" text-anchor="middle" font-family="Liberation Sans, sans-serif">1</text><rect x="282" y="285" width="6" height="7" fill="#00ff00"/><text x="285" y="291" font-size="6" fill="#063" text-anchor="middle" font-family="Liberation Sans, sans-serif">6</text><rect x="111" y="444" width="8" height="7" fill="#ff7272"/><text x="115" y="450" font-size="5.5" fill="#555" text-anchor="middle" font-family="Liberation Sans, sans-serif">10</text></svg>
<div class="a" style="left:6px;top:23px;width:44px;height:170px;border:1px solid #a3a3a3;background:#fff"></div><div class="a" style="left:10px;top:27px;width:36px;height:161px;background:#ababab"></div><svg class="a" style="left:0;top:0" width="1070" height="600" viewBox="0 0 1070 600"><defs><linearGradient id="bg" x1="0" y1="0" x2="0" y2="1"><stop offset="0" stop-color="#f4f4f4"/><stop offset="1" stop-color="#d6d6d6"/></linearGradient><linearGradient id="fg" x1="0" y1="0" x2="1" y2="0"><stop offset="0" stop-color="#e8e8e8"/><stop offset="0.7" stop-color="#cfcfcf"/><stop offset="1" stop-color="#ababab"/></linearGradient></defs><rect x="20.5" y="35.5" width="15" height="15.5" fill="#8f8f8f" opacity="0.6"/><rect x="21" y="36" width="14" height="14" fill="url(#bg)"/><rect x="21.5" y="36.5" width="13" height="13" fill="none" stroke="#fafafa" stroke-width="1"/><path d="M35,41 L37,43 L35,45 Z" fill="#f0f0f0"/><rect x="23" y="42" width="10" height="2" fill="#565656"/><rect x="27" y="38" width="2" height="10" fill="#565656"/><rect x="20.5" y="58.5" width="15" height="15.5" fill="#8f8f8f" opacity="0.6"/><rect x="21" y="59" width="14" height="14" fill="url(#bg)"/><rect x="21.5" y="59.5" width="13" height="13" fill="none" stroke="#fafafa" stroke-width="1"/><path d="M21,63 L18.5,66 L21,69 Z" fill="#f0f0f0"/><rect x="23" y="65" width="10" height="2" fill="#565656"/><rect x="20.5" y="87.5" width="15" height="15.5" fill="#8f8f8f" opacity="0.6"/><rect x="21" y="88" width="14" height="14" fill="url(#bg)"/><rect x="21.5" y="88.5" width="13" height="13" fill="none" stroke="#fafafa" stroke-width="1"/><rect x="23.0" y="90.0" width="3.2" height="3.2" fill="#8a8a8a" stroke="#5a5a5a" stroke-width="0.9"/><rect x="30.0" y="90.0" width="3.2" height="3.2" fill="#8a8a8a" stroke="#5a5a5a" stroke-width="0.9"/><rect x="23.0" y="97.0" width="3.2" height="3.2" fill="#8a8a8a" stroke="#5a5a5a" stroke-width="0.9"/><rect x="30.0" y="97.0" width="3.2" height="3.2" fill="#8a8a8a" stroke="#5a5a5a" stroke-width="0.9"/><rect x="20.5" y="110.5" width="15" height="15.5" fill="#8f8f8f" opacity="0.6"/><rect x="21" y="111" width="14" height="14" fill="url(#bg)"/><rect x="21.5" y="111.5" width="13" height="13" fill="none" stroke="#fafafa" stroke-width="1"/><rect x="24.5" y="114.5" width="7" height="7" fill="#dcdcdc" stroke="#4a4a4a" stroke-width="1.2"/><rect x="20" y="163.5" width="4.5" height="14.5" fill="#6a6a6a"/><rect x="20.7" y="164.3" width="3.2" height="3.4" fill="#efefef"/><rect x="20.7" y="169.1" width="3.2" height="3.4" fill="#efefef"/><rect x="20.7" y="173.9" width="3.2" height="3.4" fill="#efefef"/><rect x="25" y="163.5" width="11" height="14.5" fill="url(#fg)"/><path d="M25.5,163.5 V178" stroke="#fff" stroke-width="1"/><path d="M27,171 H32.5" stroke="#484848" stroke-width="2"/><path d="M32,168 L36,171 L32,174 Z" fill="#484848"/><g fill="none" stroke="#145ba6" stroke-width="2.6"><circle cx="1038.8" cy="559.9" r="6.5"/><circle cx="1054.9" cy="559.9" r="6.5"/><circle cx="1038.8" cy="576.6" r="6.5"/><circle cx="1054.9" cy="576.6" r="6.5"/><path d="M1034.5,564.5 L1043.5,555 M1050.5,555 L1059.5,564.5 M1034.5,572 L1043.5,581.5 M1050.5,581.5 L1059.5,572" stroke-width="2.2"/></g><g fill="#145ba6"><path d="M1046.8,551.5 L1048.8,555.5 L1046.8,558 L1044.8,555.5 Z"/><path d="M1046.8,585.5 L1048.8,581.5 L1046.8,579 L1044.8,581.5 Z"/><path d="M1030.3,568.3 L1034,566.3 L1036,568.3 L1034,570.3 Z"/><path d="M1063.3,568.3 L1059.6,566.3 L1057.6,568.3 L1059.6,570.3 Z"/></g></svg><div class="t" style="left:1029.3px;top:587.2px;font-weight:bold;font-size:11px;color:#145ba6;letter-spacing:-0.5px;-webkit-text-stroke:0.35px #145ba6">Perkins</div><div class="a" style="left:1066px;top:589px;width:2px;height:2px;border-radius:1px;background:#9ab"></div>
</body></html>
